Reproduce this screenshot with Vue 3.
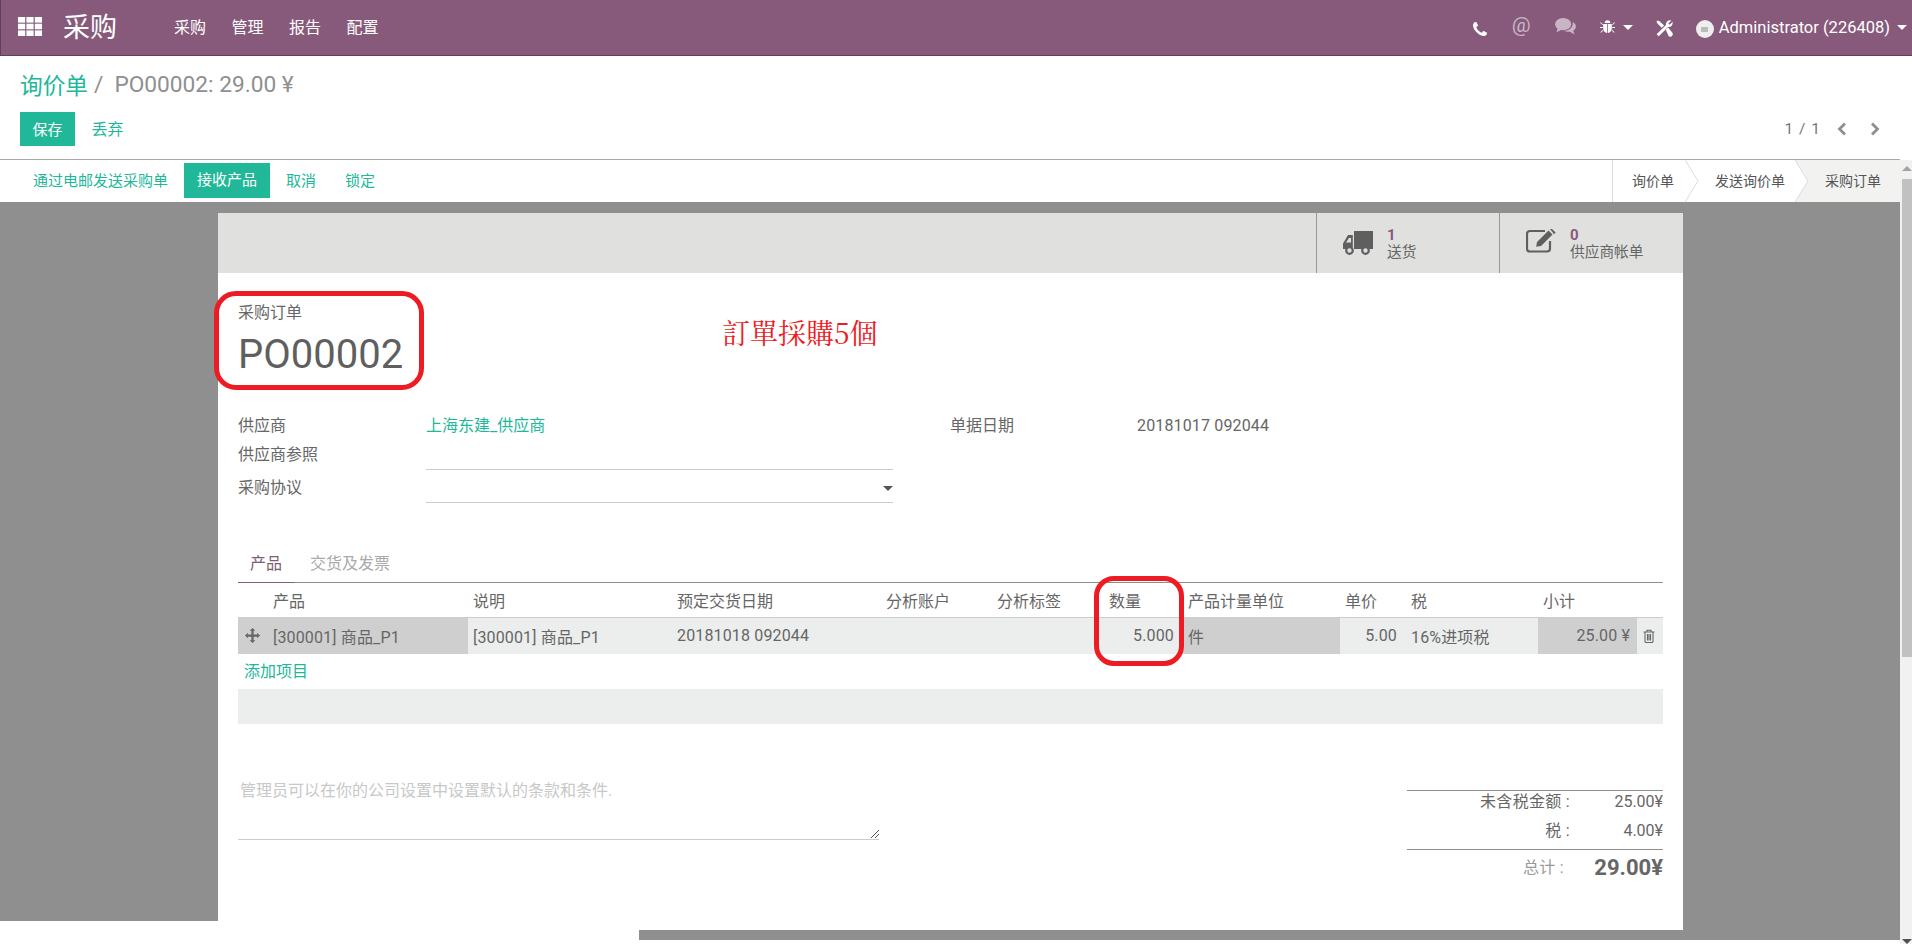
<script setup>
const menus = ['采购', '管理', '报告', '配置']
const steps = [
  { label: '询价单', w: 'w1' },
  { label: '发送询价单', w: 'w2' },
  { label: '采购订单', w: 'w3', active: true }
]
const heads = ['产品', '说明', '预定交货日期', '分析账户', '分析标签', '数量', '产品计量单位', '单价', '税', '小计', '']
</script>

<template>
  <div class="page">
    <div class="left">
      <header class="navbar">
        <svg class="apps" viewBox="0 0 24 19" width="24" height="19">
          <g fill="#fff">
            <rect x="0" y="0" width="7.2" height="5.6" /><rect x="8.4" y="0" width="7.2" height="5.6" /><rect x="16.8" y="0" width="7.2" height="5.6" />
            <rect x="0" y="6.7" width="7.2" height="5.6" /><rect x="8.4" y="6.7" width="7.2" height="5.6" /><rect x="16.8" y="6.7" width="7.2" height="5.6" />
            <rect x="0" y="13.4" width="7.2" height="5.6" /><rect x="8.4" y="13.4" width="7.2" height="5.6" /><rect x="16.8" y="13.4" width="7.2" height="5.6" />
          </g>
        </svg>
        <span class="brand">采购</span>
        <nav class="menu">
          <a v-for="m in menus" :key="m">{{ m }}</a>
        </nav>
        <div class="systray">
          <svg class="ic-phone" viewBox="0 0 1408 1408" width="14" height="14" fill="#fff">
            <path d="M1408 1112q0 27-10 70.5t-21 68.5q-21 50-122 106-94 51-186 51-27 0-53-3.5t-57.5-12.5-47-14.5-55.5-20.5-49-18q-98-35-175-83-127-79-264-216t-216-264q-48-77-83-175-3-9-18-49t-20.5-55.5-14.5-47-12.5-57.5-3.5-53q0-92 51-186 56-101 106-122 25-11 68.5-21t70.5-10q14 0 21 3 18 6 53 76 11 19 30 54t35 63.5 31 53.5q3 4 17.5 25t21.5 35.5 7 28.5q0 20-28.5 50t-62 55-62 53-28.5 46q0 9 5 22.5t8.5 20.5 14 24 11.5 19q76 137 174 235t235 174q2 1 19 11.5t24 14 20.5 8.5 22.5 5q18 0 46-28.5t53-62 55-62 50-28.5q14 0 28.5 7t35.5 21.5 25 17.5q25 15 53.5 31t63.5 35 54 30q70 35 76 53 3 7 3 21z" />
          </svg>
          <span class="ic-at">@</span>
          <svg class="ic-chat" viewBox="0 0 22 18" width="21" height="17" fill="#c9b4c5">
            <ellipse cx="8.5" cy="6.5" rx="8.5" ry="6.5" />
            <path d="M3 10 L1.5 15 L8 12 Z" />
            <path d="M18.6 4.2 C20.8 5.4 22 7.1 22 9 C22 10.9 20.9 12.4 19.2 13.4 L20.6 17.6 L15.6 14.6 C13.4 14.9 11 14.4 9.4 13.6 C14.8 13.6 19.4 10.2 18.6 4.2 Z" />
          </svg>
          <svg class="ic-bug" viewBox="0 0 16 16" width="15" height="15" fill="#fff">
            <path d="M5 4.2a3 3 0 0 1 6 0Z" />
            <path d="M3.4 5.2h4.2v9.6C5.2 14.6 3.4 12.6 3.4 9.8ZM8.4 5.2h4.2v4.6c0 2.8-1.8 4.8-4.2 5Z" />
            <path d="M.6 3.4l2.6 2.4-.6.7L0 4.1ZM15.4 3.4l-2.6 2.4.6.7L16 4.1ZM0 8.6h3v1H0ZM13 8.6h3v1h-3ZM.4 14l2.8-2.6.6.7L1.1 14.7ZM15.6 14l-2.8-2.6-.6.7 2.7 2.6Z" />
          </svg>
          <i class="caret bug-caret"></i>
          <svg class="ic-tools" viewBox="0 0 16 16" width="17" height="17" fill="#fff">
            <path d="M2.6 15.4.6 13.4 9.4 4.6C9 2.2 11.2-.2 14.4.4L11.6 3.2l1.2 1.2 2.8-2.8c.6 3.2-1.8 5.4-4.2 5Z" />
            <path d="M.4 1.6 1.6.4 3.6 1.4 7.6 5.2 5.4 7.4 1.6 3.6ZM9.2 9.2 11.4 7 15.4 12C16.2 13 15.8 14.2 15 15S13 16.2 12 15.4Z" />
          </svg>
          <span class="avatar"><i></i></span>
          <span class="user">Administrator (226408)</span>
          <i class="caret user-caret"></i>
        </div>
      </header>

      <section class="control">
        <ol class="crumbs">
          <li class="link">询价单</li>
          <li class="sep">/</li>
          <li class="now">PO00002: 29.00 ¥</li>
        </ol>
        <div class="control-row">
          <button class="btn primary">保存</button>
          <button class="btn flat">丢弃</button>
          <div class="pager">
            <span>1 / 1</span>
            <svg viewBox="0 0 10 14" width="10" height="14"><path d="M8 1.5 2.5 7 8 12.5" fill="none" stroke="#8f8f8f" stroke-width="2.8" /></svg>
            <svg viewBox="0 0 10 14" width="10" height="14"><path d="M2 1.5 7.5 7 2 12.5" fill="none" stroke="#8f8f8f" stroke-width="2.8" /></svg>
          </div>
        </div>
      </section>

      <section class="statusbar">
        <div class="actions">
          <a class="action a1">通过电邮发送采购单</a>
          <a class="action on">接收产品</a>
          <a class="action a3">取消</a>
          <a class="action">锁定</a>
        </div>
        <div class="steps">
          <div v-for="s in steps" :key="s.label" class="step" :class="[s.w, { active: s.active }]">
            <span>{{ s.label }}</span>
            <svg v-if="!s.active" class="arrow" viewBox="0 0 14 42" width="14" height="42">
              <path d="M0 0 13 21 0 42" fill="#fff" stroke="#dcdcdc" />
            </svg>
          </div>
        </div>
      </section>

      <main class="content">
        <div class="gutter short"></div>
        <article class="sheet">
          <div class="stats">
            <div class="stat">
              <svg class="truck" viewBox="0 0 30 24" width="30" height="24" fill="#5f5f5f">
                <path d="M11 0h19v18H11ZM9.8 4v14H0v-5.5L5 4Z" />
                <path d="M3 11.5 6 7h2v4.5Z" fill="#e0e0df" />
                <circle cx="6.5" cy="19.5" r="3.3" fill="#e0e0df" stroke="#5f5f5f" stroke-width="2.2" />
                <circle cx="22.5" cy="19.5" r="3.3" fill="#e0e0df" stroke="#5f5f5f" stroke-width="2.2" />
              </svg>
              <div><b>1</b><span>送货</span></div>
            </div>
            <div class="stat">
              <svg class="pencil" viewBox="0 0 30 24" width="30" height="24">
                <path d="M24 12v7.5a3 3 0 0 1-3 3H4a3 3 0 0 1-3-3V5a3 3 0 0 1 3-3h15" fill="none" stroke="#5f5f5f" stroke-width="2.2" />
                <path d="M11 13 22.5 1.5l4 4L15 17l-4.8.8ZM24 0l1.5-.5L29.6 3.6 28 5.2Z" fill="#5f5f5f" />
              </svg>
              <div><b>0</b><span>供应商帐单</span></div>
            </div>
          </div>

          <div class="body">
            <div class="title">
              <div class="title-label">采购订单</div>
              <h1>PO00002</h1>
            </div>

            <div class="groups">
              <div class="group-left">
                <div class="field">
                  <label>供应商</label>
                  <a class="value link">上海东建_供应商</a>
                </div>
                <div class="field ref">
                  <label>供应商参照</label>
                  <span class="value input"></span>
                </div>
                <div class="field deal">
                  <label>采购协议</label>
                  <span class="value input"><i class="caret dark"></i></span>
                </div>
              </div>
              <div class="group-right">
                <label>单据日期</label>
                <span>20181017 092044</span>
              </div>
            </div>

            <div class="tabs">
              <a class="tab active">产品</a>
              <a class="tab">交货及发票</a>
            </div>

            <table class="lines">
              <colgroup>
                <col style="width: 230px" /><col style="width: 204px" /><col style="width: 209px" /><col style="width: 111px" />
                <col style="width: 112px" /><col style="width: 79px" /><col style="width: 157px" /><col style="width: 66px" />
                <col style="width: 132px" /><col style="width: 99px" /><col style="width: 26px" />
              </colgroup>
              <thead>
                <tr><th v-for="(h, i) in heads" :key="i" :class="{ first: i === 0 }">{{ h }}</th></tr>
              </thead>
              <tbody>
                <tr>
                  <td class="req first">
                    <svg class="ic-move" viewBox="0 0 16 16" width="15" height="15" fill="#666">
                      <path d="M8 0l3 3H9.2v3.8H13V5l3 3-3 3V9.2H9.2V13H11l-3 3-3-3h1.8V9.2H3V11L0 8l3-3v1.8h3.8V3H5Z" />
                    </svg>
                    [300001] 商品_P1
                  </td>
                  <td>[300001] 商品_P1</td>
                  <td>20181018 092044</td>
                  <td></td>
                  <td></td>
                  <td class="num qty">5.000</td>
                  <td class="req unit">件</td>
                  <td class="num price">5.00</td>
                  <td>16%进项税</td>
                  <td class="req num sub">25.00 ¥</td>
                  <td class="trash">
                    <svg viewBox="0 0 12 14" width="12" height="14" fill="none" stroke="#666" stroke-width="1.1">
                      <path d="M.5 3h11M4 3V1.2h4V3M2 3v9.2c0 .7.5 1.3 1 1.3h6c.5 0 1-.6 1-1.3V3M4.5 5v6.5M6 5v6.5M7.5 5v6.5" />
                    </svg>
                  </td>
                </tr>
              </tbody>
            </table>
            <a class="add link">添加项目</a>
            <div class="empty-row"></div>

            <div class="bottom">
              <div class="notes">
                <span>管理员可以在你的公司设置中设置默认的条款和条件.</span>
                <svg class="grip" viewBox="0 0 8 8" width="8" height="8"><path d="M0 8 8 0M4 8 8 4" stroke="#555" stroke-width="1" /></svg>
              </div>
              <div class="totals">
                <div class="tot-row r1"><label>未含税金额 :</label><span>25.00¥</span></div>
                <div class="tot-row r2"><label>税 :</label><span>4.00¥</span></div>
                <div class="tot-row grand"><label>总计 :</label><span>29.00¥</span></div>
              </div>
            </div>
          </div>

          <div class="mark mark-title"></div>
          <div class="mark mark-qty"></div>
          <div class="note-red">訂單採購5個</div>
        </article>
        <div class="gutter right"></div>
      </main>
      <div class="hbar"></div>
    </div>

    <aside class="vbar">
      <i class="up"></i>
      <div class="thumb"></div>
      <i class="down"></i>
    </aside>
  </div>
</template>

<style scoped>
.page {
  height: 944px;
  width: 1912px;
  overflow: hidden;
  display: flex;
  background: #fff;
  font-family: Roboto, "Noto Sans CJK SC", sans-serif;
  font-size: 16px;
  color: #666;
  position: relative;
}
.left {
  width: 1900px;
  flex: none;
}
.navbar {
  position: relative;
  margin-right: -12px;
  height: 56px;
  box-sizing: border-box;
  background: #875a7b;
  border-bottom: 1px solid #5e4057;
  border-left: 1px solid #5e4057;
  display: flex;
  align-items: center;
  color: #fff;
}
.apps {
  margin-left: 17px;
  margin-top: -3px;
}
.brand {
  font-size: 27px;
  margin-left: 21px;
  margin-top: -4px;
  width: 55px;
}
.menu {
  margin-left: 56px;
  margin-top: -4px;
  display: flex;
  gap: 25.5px;
}
.menu a {
  font-size: 16px;
}
.systray {
  margin-left: auto;
  display: flex;
  align-items: center;
  height: 100%;
  padding-right: 5px;
}
.ic-phone {
  margin-right: 25px;
  margin-top: 3px;
}
.ic-at {
  font-size: 21px;
  color: #c9b4c5;
  margin-right: 24px;
  margin-top: -5px;
  width: 19px;
}
.ic-chat {
  margin-right: 24px;
  margin-top: -3px;
}
.ic-bug {
  margin-top: -2px;
}
.caret {
  display: inline-block;
  border-top: 5px solid #fff;
  border-left: 5px solid transparent;
  border-right: 5px solid transparent;
}
.bug-caret {
  margin-left: 8px;
  margin-right: 23px;
}
.ic-tools {
  margin-right: 23px;
  margin-top: 1px;
}
.avatar {
  width: 18px;
  height: 18px;
  border-radius: 50%;
  background: #eee;
  margin-top: 3px;
  margin-right: 5px;
  display: flex;
  align-items: center;
  justify-content: center;
}
.avatar i {
  width: 7px;
  height: 5px;
  background: #bbb;
}
.user {
  font-size: 16.5px;
  margin-top: -1px;
}
.user-caret {
  margin-left: 7px;
}

.control {
  height: 104px;
  padding: 0 20px;
  box-sizing: border-box;
  border-bottom: 1px solid #a9a9a9;
}
.crumbs {
  list-style: none;
  margin: 0;
  padding: 0;
  height: 56px;
  display: flex;
  align-items: center;
  font-size: 22.7px;
  color: #8f8f8f;
}
.crumbs .link {
  color: #21b799;
}
.sep {
  margin: 0 11px 0 6px;
}
.control-row {
  display: flex;
  align-items: center;
  height: 34px;
}
.btn {
  font: inherit;
  font-size: 15px;
  height: 34px;
  border: 0;
  padding: 0 0 2px;
  width: 55px;
  background: none;
}
.primary {
  background: #21b799;
  color: #fff;
}
.flat {
  color: #21b799;
  font-size: 16px;
  width: 65px;
}
.pager {
  margin-left: auto;
  display: flex;
  align-items: center;
  color: #777;
  font-size: 15.5px;
  gap: 16px;
  letter-spacing: 1px;
}
.pager svg + svg {
  margin-left: 7px;
}

.statusbar {
  height: 42px;
  display: flex;
  justify-content: space-between;
  box-sizing: border-box;
  padding-top: 3px;
}
.actions {
  display: flex;
  padding-left: 20px;
}
.action {
  height: 35px;
  line-height: 37px;
  padding: 0 14px 0 15px;
  font-size: 15px;
  color: #21b799;
}
.a1 {
  padding: 0 16px 0 13px;
}
.a3 {
  padding: 0 14px 0 16px;
}
.action.on {
  padding: 0 13px;
  background: #21b799;
  color: #fff;
  line-height: 35px;
}
.steps {
  display: flex;
  margin-top: -3px;
  border-left: 1px solid #dcdcdc;
  height: 42px;
}
.step {
  font-size: 14px;
  line-height: 42px;
  position: relative;
  box-sizing: border-box;
  padding-left: 19px;
  color: #555;
}
.w1 { width: 73px; }
.w2 { width: 110px; padding-left: 29px; }
.w3 { width: 104px; padding-left: 29px; background: #f2f2f1; }
.arrow {
  position: absolute;
  right: -13px;
  top: 0;
  z-index: 1;
}

.content {
  display: flex;
  align-items: flex-start;
  background: #fff;
  height: 728px;
}
.gutter {
  width: 218px;
  height: 728px;
  background: #8f8f8f;
  flex: none;
}
.gutter.short {
  height: 719px;
}
.gutter.right {
  width: 217px;
}
.sheet {
  width: 1465px;
  height: 728px;
  flex: none;
  background: #fff;
  box-sizing: border-box;
  border-top: 11px solid #8f8f8f;
  position: relative;
}
.stats {
  height: 60px;
  background: #e0e0df;
  display: flex;
  justify-content: flex-end;
}
.stat {
  width: 184px;
  box-sizing: border-box;
  border-left: 1px solid #999;
  display: flex;
  padding: 14px 0 0 26px;
  gap: 14px;
  font-size: 14px;
  line-height: 17px;
}
.stat:first-child {
  width: 183px;
  padding-left: 26px;
}
.truck {
  margin-top: 4px;
}
.pencil {
  margin-top: 2px;
}
.stat b {
  display: block;
  color: #875a7b;
  font-size: 15px;
}
.stat span {
  font-size: 14.7px;
}

.body {
  padding: 0 20px 0 20px;
}
.title {
  height: 100px;
  padding-top: 30px;
}
.title-label {
  font-size: 16px;
  line-height: 20px;
}
h1 {
  margin: 4px 0 0;
  font-size: 40px;
  font-weight: 400;
  line-height: 56px;
  color: #5f5f5f;
}
.groups {
  display: flex;
  margin-top: 12px;
  height: 133px;
}
.group-left {
  width: 655px;
  flex: none;
}
.field {
  display: flex;
  line-height: 22px;
  height: 29px;
}
.field.ref {
  height: 33px;
}
.field label {
  width: 188px;
  flex: none;
}
.field .value {
  width: 467px;
  box-sizing: border-box;
}
.link {
  color: #21b799;
}
.input {
  border-bottom: 1px solid #ccc;
  position: relative;
  display: block;
}
.ref .input {
  height: 26px;
}
.deal .input {
  height: 26px;
}
.caret.dark {
  border-top-color: #555;
  position: absolute;
  right: 0;
  top: 9px;
}
.group-right {
  margin-left: 57px;
  display: flex;
  line-height: 22px;
}
.group-right label {
  width: 187px;
}
.group-right span {
  letter-spacing: .15px;
}

.tabs {
  display: flex;
  height: 35px;
  box-sizing: border-box;
  margin-top: -1px;
}
.tab {
  padding: 6px 12px 0;
  color: #aaa;
  font-size: 16px;
  line-height: 22px;
  margin-right: 4px;
}
.tab.active {
  color: #7c5e74;
  border-bottom: 1px solid #875a7b;
  height: 36px;
  box-sizing: border-box;
}
.lines {
  width: 1425px;
  table-layout: fixed;
  border-collapse: collapse;
  border-top: 1px solid #8f8f8f;
}
th {
  height: 35px;
  padding: 0 5px;
  font-weight: 400;
  text-align: left;
  box-sizing: border-box;
  white-space: nowrap;
  border-bottom: 1px solid #ccc;
  color: #666;
}
th.first {
  padding-left: 35px;
}
td {
  height: 36px;
  background: #eceeed;
  padding: 0 5px;
  white-space: nowrap;
  box-sizing: border-box;
  letter-spacing: .15px;
}
td.req {
  background: #cfcfcf;
}
td.first {
  padding-left: 35px;
  position: relative;
}
.ic-move {
  position: absolute;
  left: 7px;
  top: 10px;
}
.num {
  text-align: right;
}
.qty {
  padding-right: 9px;
}
.price {
  padding-right: 9px;
}
.sub {
  padding-right: 7px;
}
.trash {
  padding: 3px 0 0 6px;
}
.add {
  display: block;
  font-size: 16px;
  line-height: 35px;
  padding-left: 6px;
}
.empty-row {
  height: 35px;
  background: #eceeed;
}
.bottom {
  display: flex;
  justify-content: space-between;
  margin-top: 55px;
}
.notes {
  width: 641px;
  height: 59px;
  box-sizing: border-box;
  margin-top: 2px;
  padding-left: 2px;
  border-bottom: 1px solid #ccc;
  color: #c8c8c8;
  font-size: 16px;
  line-height: 20px;
  position: relative;
}
.grip {
  position: absolute;
  right: 0;
  bottom: 1px;
}
.totals {
  width: 256px;
  margin-top: 11px;
  border-top: 1px solid #8f8f8f;
  font-size: 16px;
}
.tot-row {
  display: flex;
  justify-content: flex-end;
  line-height: 29px;
  height: 29px;
}
.r1 {
  margin-top: -4px;
}
.r2 {
  margin-bottom: 4px;
}
.tot-row label {
  color: #666;
  letter-spacing: .3px;
}
.tot-row span {
  width: 93px;
  text-align: right;
}
.grand {
  border-top: 1px solid #8f8f8f;
  height: 38px;
  line-height: 36px;
}
.grand label {
  color: #999;
  padding-right: 6px;
}
.grand span {
  font-size: 22px;
  font-weight: 700;
}
.hbar {
  height: 10px;
  margin-left: 639px;
  background: #8f8f8f;
}

.mark {
  position: absolute;
  border: 5px solid #ed1c24;
  box-sizing: border-box;
}
.mark-title {
  left: -4px;
  top: 78px;
  width: 210px;
  height: 99px;
  border-radius: 22px;
}
.mark-qty {
  left: 876px;
  top: 363px;
  width: 90px;
  height: 90px;
  border-radius: 20px;
}
.note-red {
  position: absolute;
  left: 504px;
  top: 103px;
  color: #ed1c24;
  font-family: "Noto Serif CJK TC", "Noto Sans CJK TC", "Liberation Serif", serif;
  font-size: 28px;
  line-height: 32px;
}

.vbar {
  width: 12px;
  flex: none;
  margin-top: 160px;
  background: #f1f1f1;
  position: relative;
}
.thumb {
  position: absolute;
  top: 19px;
  left: 2px;
  right: 0;
  height: 478px;
  background: #c1c1c1;
}
.up, .down {
  position: absolute;
  right: 0;
  border-left: 5px solid transparent;
  border-right: 5px solid transparent;
}
.up {
  top: 6px;
  border-bottom: 5px solid #a3a3a3;
}
.down {
  bottom: 0;
  border-top: 5px solid #505050;
}
</style>
